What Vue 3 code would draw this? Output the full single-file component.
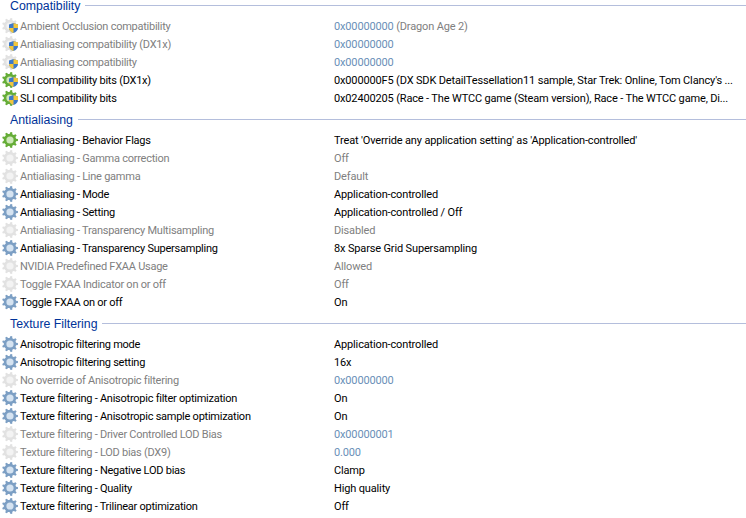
<script setup>
const gearPath = (() => {
  const teeth = 9, cx = 8, cy = 8, ro = 8, ri = 6.2, hole = 3.6
  let d = ''
  for (let i = 0; i < teeth; i++) {
    const step = (Math.PI * 2) / teeth
    const a = i * step
    const pts = [
      [ri, a - step * 0.5],
      [ri, a - step * 0.3],
      [ro, a - step * 0.16],
      [ro, a + step * 0.16],
      [ri, a + step * 0.3]
    ]
    pts.forEach(([r, t], j) => {
      const x = (cx + r * Math.cos(t)).toFixed(2)
      const y = (cy + r * Math.sin(t)).toFixed(2)
      d += (i === 0 && j === 0 ? 'M' : 'L') + x + ' ' + y
    })
  }
  d += `Z M${cx + hole} ${cy} A${hole} ${hole} 0 1 0 ${cx - hole} ${cy} A${hole} ${hole} 0 1 0 ${cx + hole} ${cy}Z`
  return d
})()

const groups = [
  {
    title: 'Compatibility',
    rows: [
      { n: 'Ambient Occlusion compatibility', v: '0x00000000', x: ' (Dragon Age 2)', i: 'grey', s: true, hex: true, off: true },
      { n: 'Antialiasing compatibility (DX1x)', v: '0x00000000', i: 'grey', s: true, hex: true, off: true },
      { n: 'Antialiasing compatibility', v: '0x00000000', i: 'grey', s: true, hex: true, off: true },
      { n: 'SLI compatibility bits (DX1x)', v: "0x000000F5 (DX SDK DetailTessellation11 sample, Star Trek: Online, Tom Clancy's ...", i: 'green', s: true },
      { n: 'SLI compatibility bits', v: '0x02400205 (Race - The WTCC game (Steam version), Race - The WTCC game, Di...', i: 'green', s: true }
    ]
  },
  {
    title: 'Antialiasing',
    rows: [
      { n: 'Antialiasing - Behavior Flags', v: "Treat 'Override any application setting' as 'Application-controlled'", i: 'green' },
      { n: 'Antialiasing - Gamma correction', v: 'Off', i: 'grey', off: true },
      { n: 'Antialiasing - Line gamma', v: 'Default', i: 'grey', off: true },
      { n: 'Antialiasing - Mode', v: 'Application-controlled', i: 'blue' },
      { n: 'Antialiasing - Setting', v: 'Application-controlled / Off', i: 'blue' },
      { n: 'Antialiasing - Transparency Multisampling', v: 'Disabled', i: 'grey', off: true },
      { n: 'Antialiasing - Transparency Supersampling', v: '8x Sparse Grid Supersampling', i: 'blue' },
      { n: 'NVIDIA Predefined FXAA Usage', v: 'Allowed', i: 'grey', off: true },
      { n: 'Toggle FXAA Indicator on or off', v: 'Off', i: 'grey', off: true },
      { n: 'Toggle FXAA on or off', v: 'On', i: 'blue' }
    ]
  },
  {
    title: 'Texture Filtering',
    rows: [
      { n: 'Anisotropic filtering mode', v: 'Application-controlled', i: 'blue' },
      { n: 'Anisotropic filtering setting', v: '16x', i: 'blue' },
      { n: 'No override of Anisotropic filtering', v: '0x00000000', i: 'grey', hex: true, off: true },
      { n: 'Texture filtering - Anisotropic filter optimization', v: 'On', i: 'blue' },
      { n: 'Texture filtering - Anisotropic sample optimization', v: 'On', i: 'blue' },
      { n: 'Texture filtering - Driver Controlled LOD Bias', v: '0x00000001', i: 'grey', hex: true, off: true },
      { n: 'Texture filtering - LOD bias (DX9)', v: '0.000', i: 'grey', hex: true, off: true },
      { n: 'Texture filtering - Negative LOD bias', v: 'Clamp', i: 'blue' },
      { n: 'Texture filtering - Quality', v: 'High quality', i: 'blue' },
      { n: 'Texture filtering - Trilinear optimization', v: 'Off', i: 'blue' }
    ]
  }
]
</script>

<template>
  <div class="list">
    <section v-for="g in groups" :key="g.title">
      <header class="head">
        <span class="title">{{ g.title }}</span>
        <span class="rule"></span>
      </header>
      <div v-for="r in g.rows" :key="r.n" class="row" :class="{ off: r.off }">
        <span class="icon">
          <svg class="gear" width="16" height="16" viewBox="0 0 16 16">
            <circle cx="8" cy="8" r="4" :class="'c-' + r.i" />
            <path :d="gearPath" fill-rule="evenodd" :class="'g-' + r.i" />
          </svg>
          <svg v-if="r.s" class="shield" width="9" height="10" viewBox="0 0 9 10">
            <path d="M4.5 0 L9 1.5 V5 C9 7.5 7 9 4.5 10 C2 9 0 7.5 0 5 V1.5 Z" fill="#3d79c9" />
            <path d="M4.5 0 L9 1.5 V5 H4.5 Z" fill="#f2c73c" />
            <path d="M0 5 H4.5 V10 C2 9 0 7.5 0 5 Z" fill="#f2c73c" />
          </svg>
        </span>
        <span class="name">{{ r.n }}</span>
        <span class="value"><span :class="{ hex: r.hex }">{{ r.v }}</span><span v-if="r.x">{{ r.x }}</span></span>
      </div>
    </section>
  </div>
</template>

<style>
html, body { margin: 0; background: #fff; overflow: hidden; }
</style>

<style scoped>
.list {
  width: 746px;
  height: 518px;
  overflow: hidden;
  background: #fff;
  font-family: Roboto, "Liberation Sans", sans-serif;
  font-size: 11px;
  letter-spacing: -0.25px;
  color: #000;
}
.head {
  height: 24px;
  display: flex;
  align-items: center;
  padding-left: 10px;
  gap: 5px;
}
section:first-child .head {
  height: 11px;
  margin-bottom: 6px;
}
.title {
  color: #003399;
  font-family: "Liberation Sans", sans-serif;
  font-size: 12.3px;
  letter-spacing: 0;
  line-height: 13px;
  padding-top: 2px;
  white-space: nowrap;
}
.rule { flex: 1; height: 1px; background: #b4bedc; }
.row {
  height: 18px;
  display: flex;
  align-items: center;
  white-space: nowrap;
}
.icon { position: relative; width: 16px; height: 16px; margin: 0 2px; flex: none; }
.icon svg { display: block; }
.gear { filter: blur(0.25px); }
.shield { position: absolute; left: 7px; top: 5px; }
.name { width: 314px; flex: none; }
.value { letter-spacing: -0.15px; }
.off { color: #808080; }
.hex { color: #6a8fb8; }
.g-grey { fill: #e2e2e2; }
.g-green { fill: #66ad38; }
.g-blue { fill: #7c9fc4; }
.c-grey { fill: #f3f3f3; }
.c-green { fill: #cfe8bb; }
.c-blue { fill: #d5e3f1; }
</style>
